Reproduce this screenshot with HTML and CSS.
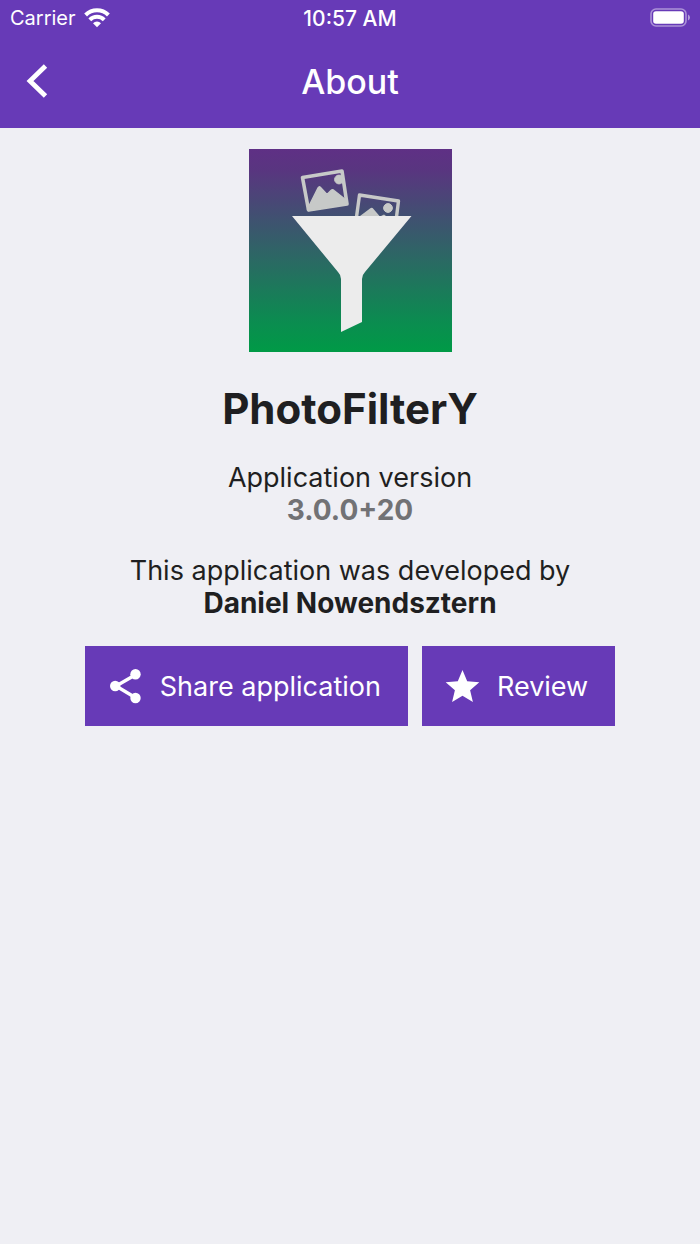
FILE: index.html
```html
<!DOCTYPE html>
<html lang="en">
<head>
<meta charset="utf-8">
<meta name="viewport" content="width=device-width, initial-scale=1">
<title>About</title>
<link rel="stylesheet" href="styles.css">
</head>
<body>
<header class="top">
  <div class="status">
    <div class="status-left">
      <span>Carrier</span>
      <svg class="wifi" viewBox="0 0 26 20" aria-hidden="true">
        <g fill="none" stroke="#fff" stroke-width="4">
          <path d="M1.600 7a16.200 16.200 0 0 1 22.800 0"/>
          <path d="M5.800 11.800a10.200 10.200 0 0 1 14.400 0"/>
        </g>
        <path fill="#fff" d="M9 15.300a5.600 5.600 0 0 1 8 0L13 19.300z"/>
      </svg>
    </div>
    <span class="clock">10:57 AM</span>
    <div class="status-right">
      <svg class="battery" viewBox="0 0 40 20" aria-hidden="true">
        <rect x="1" y="1" width="35" height="17" rx="5" fill="none" stroke="#fff" stroke-opacity=".45" stroke-width="1.6"/>
        <rect x="3.2" y="3.2" width="30.6" height="12.6" rx="2.8" fill="#fff"/>
        <path d="M38 6.500q2 .8 2 3t-2 3z" fill="#fff" fill-opacity=".5"/>
      </svg>
    </div>
  </div>
  <nav class="bar">
    <button class="back" type="button" aria-label="Back">
      <svg viewBox="0 0 22 34" aria-hidden="true"><path d="M19.500 2 4 17l15.500 15" fill="none" stroke="#fff" stroke-width="4.800"/></svg>
    </button>
    <h1 class="bar-title">About</h1>
  </nav>
</header>
<main class="about">
  <svg class="logo" viewBox="0 0 203 203" role="img" aria-label="PhotoFilterY logo">
    <defs>
      <linearGradient id="sky" x1="0" y1="0" x2="0" y2="1">
        <stop offset="0" stop-color="#5f3085"/>
        <stop offset=".1" stop-color="#593580"/>
        <stop offset=".85" stop-color="#0b8c50"/>
        <stop offset="1" stop-color="#009a46"/>
      </linearGradient>
    </defs>
    <rect width="203" height="203" fill="url(#sky)"/>
    <g fill="#c7c9c8" stroke="#c7c9c8" stroke-linejoin="round">
      <path fill="none" stroke-width="3.600" d="M53.500 28.500 93 22 98 55 59.500 61z"/>
      <path stroke-width="1.500" d="M58.500 60 69 39q1-2 2.500-.5l6.500 7 4-4q1.500-1.500 3 0L97 51v4L59.500 61.500z"/>
      <circle cx="90" cy="30.500" r="4.400"/>
      <path fill="none" stroke-width="3.400" d="M107.500 68 110.500 46 149.500 52 147.500 68"/>
      <path stroke="none" d="M111 67q4-3 10-7.500 2-1.500 3.500.5l6 7zM132 67l3-1.500 2 1.500z"/>
      <circle cx="139" cy="59" r="4.400"/>
    </g>
    <path fill="#ececec" d="M43 67H162.500L116 123q-3 3-3 7V173L92 183V130q0-4-3-7z"/>
  </svg>
  <h2 class="name">PhotoFilterY</h2>
  <p class="line">Application version</p>
  <p class="line version">3.0.0+20</p>
  <p class="line credit">This application was developed by</p>
  <p class="line author">Daniel Nowendsztern</p>
  <div class="actions">
    <button class="action" type="button">
      <svg viewBox="0 0 36 36" aria-hidden="true">
        <path d="M28 6.500 8 18l20 12" fill="none" stroke="#fff" stroke-width="3.400"/>
        <g fill="#fff"><circle cx="27.500" cy="6.300" r="5.200"/><circle cx="7.200" cy="18" r="5.200"/><circle cx="27.500" cy="30" r="5.200"/></g>
      </svg>
      <span>Share application</span>
    </button>
    <button class="action" type="button">
      <svg viewBox="0 0 36 36" aria-hidden="true">
        <path fill="#fff" d="M17.500 27.800 27.900 34 25.100 22.200 34.300 14.200 22.200 13.200 17.500 2 12.800 13.200.7 14.200 9.900 22.200 7.100 34z"/>
      </svg>
      <span>Review</span>
    </button>
  </div>
</main>
</body>
</html>
```
FILE: styles.css
```css
* {
  box-sizing: border-box;
}

body {
  margin: 0;
  min-height: 100vh;
  background: #efeff4;
  color: #1f1f21;
  font-family: Inter, "Liberation Sans", sans-serif;
}

h1, h2, p {
  margin: 0;
}

button {
  margin: 0;
  border: 0;
  border-radius: 0;
  color: #fff;
  font: inherit;
  cursor: pointer;
}

.top {
  background: #673ab7;
  color: #fff;
}

.status {
  display: grid;
  grid-template-columns: 1fr auto 1fr;
  align-items: center;
  height: 36px;
  padding: 0 10px;
  font-size: 20px;
}

.status-left {
  display: flex;
  align-items: center;
  gap: 8px;
}

.wifi {
  width: 26px;
  height: 20px;
}

.clock {
  font-size: 21px;
  font-weight: 500;
}

.status-right {
  display: flex;
  justify-content: flex-end;
}

.battery {
  width: 40px;
  height: 20px;
}

.bar {
  display: grid;
  grid-template-columns: 1fr auto 1fr;
  align-items: center;
  height: 92px;
  padding: 0 16px 2px;
}

.back {
  display: flex;
  justify-self: start;
  padding: 10px;
  background: none;
}

.back svg {
  width: 22px;
  height: 34px;
}

.bar-title {
  font-size: 34px;
  font-weight: 500;
}

.about {
  display: flex;
  flex-direction: column;
  align-items: center;
  padding: 21px 16px;
  text-align: center;
}

.logo {
  width: 203px;
  height: 203px;
}

.name {
  margin: 33px 0 28px;
  font-size: 42px;
  font-weight: 700;
  line-height: 48px;
}

.line {
  font-size: 27px;
  line-height: 33px;
}

.version,
.author {
  font-size: 28px;
  font-weight: 700;
}

.version {
  color: #727275;
}

.credit {
  margin-top: 27px;
}

.actions {
  display: flex;
  flex-wrap: wrap;
  justify-content: center;
  gap: 14px;
  margin-top: 26px;
}

.action {
  display: flex;
  align-items: center;
  gap: 16px;
  height: 80px;
  padding: 0 27px 0 23px;
  background: #673ab7;
  font-size: 27px;
}

.action svg {
  width: 36px;
  height: 36px;
}
```
